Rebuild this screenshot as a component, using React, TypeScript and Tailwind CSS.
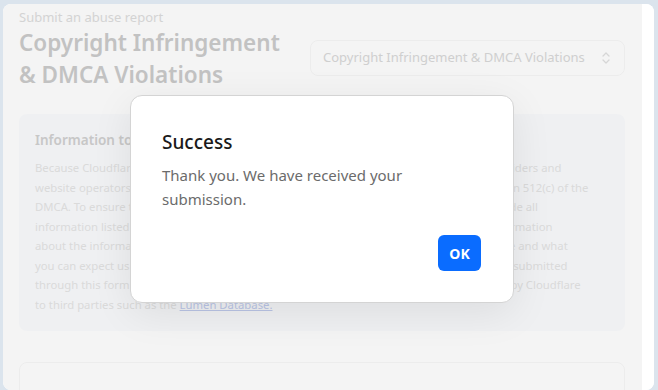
import React from "react";

function ChevronUpDown() {
  return (
    <svg width="12" height="16" viewBox="0 0 12 16" fill="none" stroke="#d6d6d6" strokeWidth="1.3" strokeLinecap="round" strokeLinejoin="round">
      <path d="M3 6 L6 3 L9 6" />
      <path d="M3 10 L6 13 L9 10" />
    </svg>
  );
}

export default function App() {
  return (
    <div
      className="relative h-[390px] w-[658px] overflow-hidden bg-[#dbe4ed] pl-[3px] pr-[4px] pt-[4px]"
      style={{ fontFamily: '"Noto Sans", "Open Sans", sans-serif' }}
    >
      <div className="flex h-[386px] overflow-hidden rounded-[8px] bg-white">
        <div className="flex-1 bg-[#f4f4f4] pl-[16px] pr-[17px]">
          <div className="flex justify-between pt-[3px]">
            <div>
              <div className="text-[13px] leading-[20px] text-[#d3d3d3]">Submit an abuse report</div>
              <div className="w-[280px] text-[22.5px] font-semibold leading-[32px] text-[#c2c2c2]">
                Copyright Infringement
                <br />& DMCA Violations
              </div>
            </div>
            <div className="mt-[33px] flex h-[36px] w-[315px] items-center justify-between whitespace-nowrap rounded-[8px] border border-[#ececec] pl-[12px] pr-[12px] text-[13px] text-[#cfcfcf]">
              <span>Copyright Infringement &amp; DMCA Violations</span>
              <ChevronUpDown />
            </div>
          </div>

          <div className="mt-[23px] rounded-[8px] bg-[#eff0f2] px-[16px] pb-[17px] pt-[16px]">
            <div className="text-[13.5px] font-semibold leading-[20px] text-[#c7c7c7]">
              Information to include in your report
            </div>
            <div className="mt-[8px] whitespace-nowrap text-[11.3px] leading-[19.5px] text-[#dadada]">
              Because Cloudflare does not host website content, we forward reports to the hosting providers and
              <br />
              website operators who are responsible for hosted content and are able to act under section 512(c) of the
              <br />
              DMCA. To ensure that your report can be processed and forwarded promptly, please include all
              <br />
              information listed in the form below, as incomplete reports cannot be used. For more information
              <br />
              about the information we need, how Cloudflare handles reports, how we respond to abuse and what
              <br />
              you can expect us to do, please see our abuse policy. Please note that copies of all reports submitted
              <br />
              through this form may be shared with the site owner and hosting provider and published by Cloudflare
              <br />
              to third parties such as the{" "}
              <span className="text-[#b9c4e4] underline">Lumen Database.</span>
            </div>
          </div>

          <div className="mt-[31px] h-[40px] rounded-[8px] border border-[#ececec]" />
        </div>
        <div className="w-[12px] bg-white" />
      </div>

      <div className="absolute left-[130px] top-[95px] h-[208px] w-[384px] rounded-[12px] border border-[#d4d4d4] bg-white pl-[31px] pr-[32px] pt-[32px] shadow-[0_10px_40px_rgba(0,0,0,0.08)]">
        <div className="text-[19px] font-medium leading-[28px] text-[#1a1a1a]">Success</div>
        <div className="mt-[7px] w-[260px] text-[15px] leading-[24px] text-[#6b6b6b]">
          Thank you. We have received your submission.
        </div>
        <div className="mt-[24px] flex justify-end">
          <button className="h-[36px] w-[43px] rounded-[6px] bg-[#0a6cff] text-[14px] font-bold text-white">
            OK
          </button>
        </div>
      </div>
    </div>
  );
}
